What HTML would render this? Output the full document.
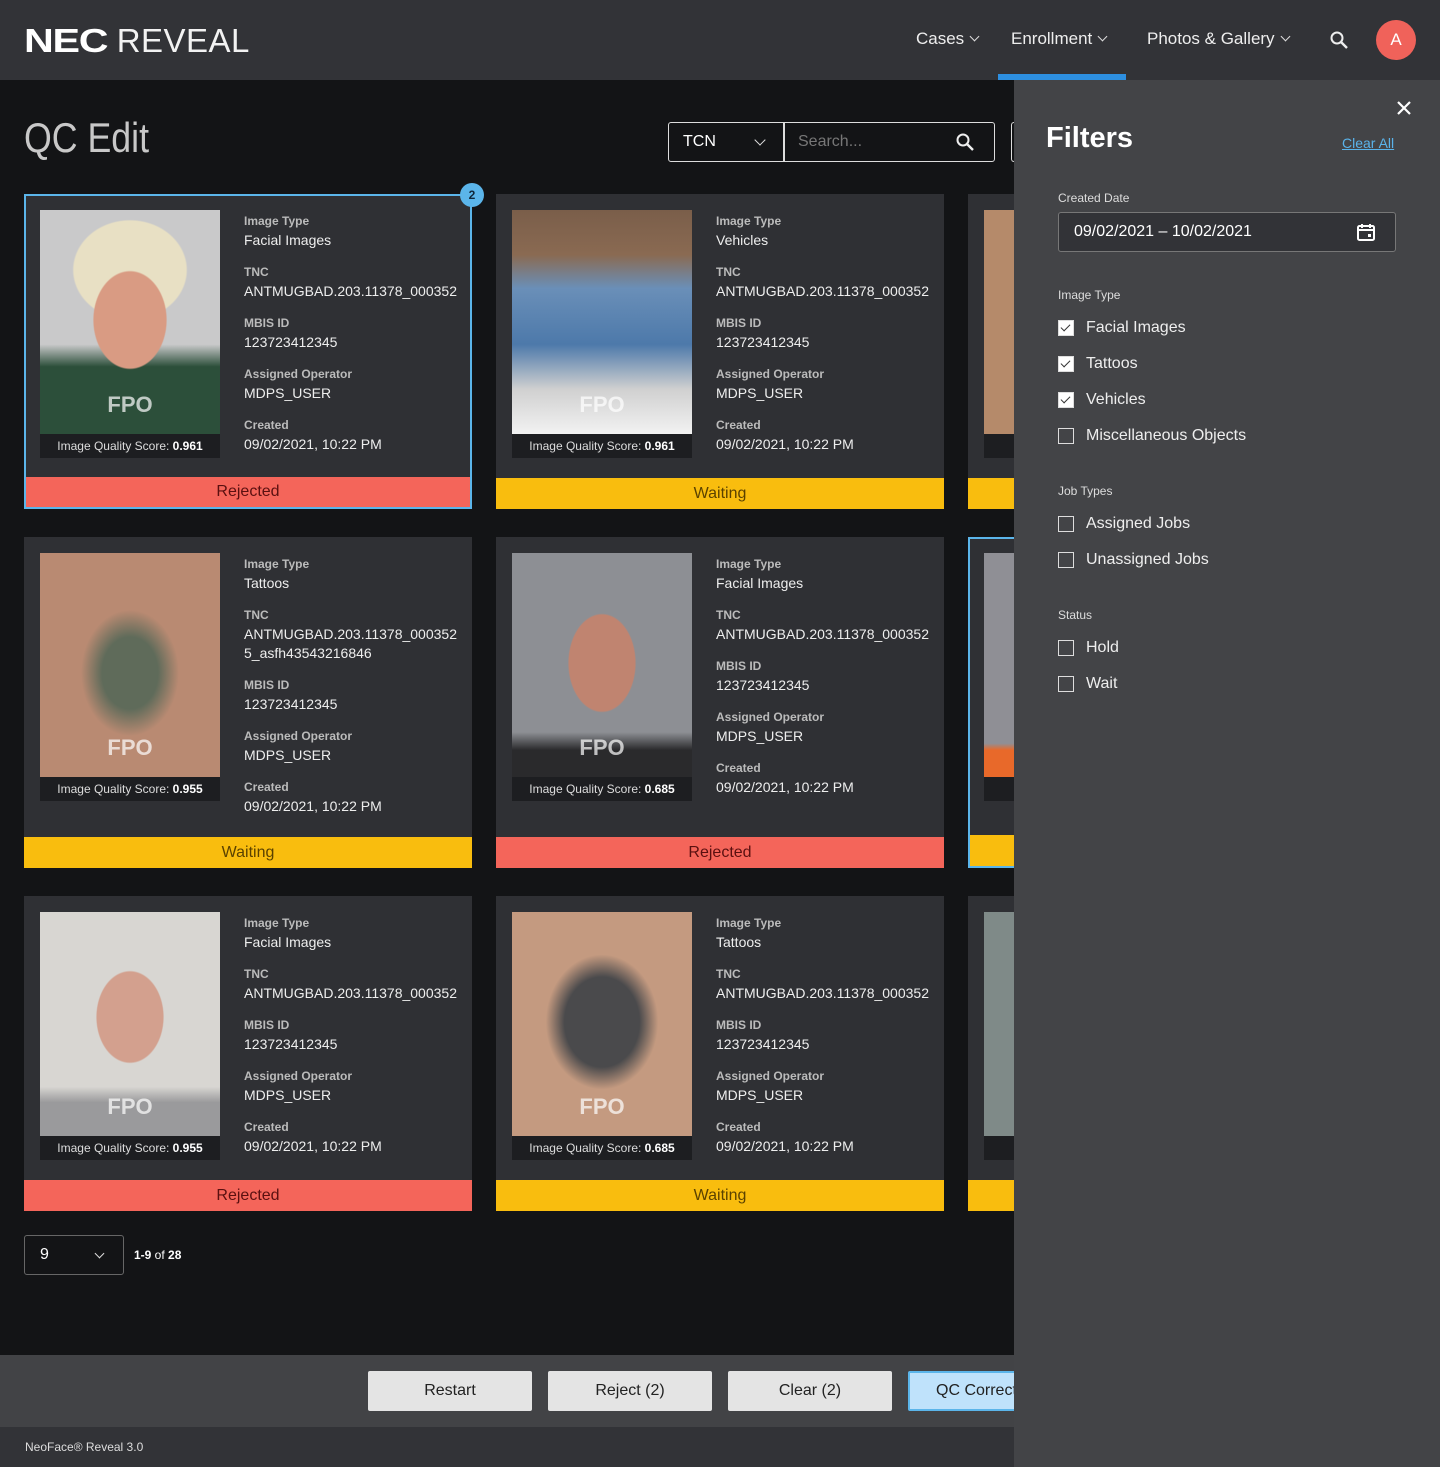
<!DOCTYPE html>
<html><head><meta charset="utf-8"><style>
*{box-sizing:border-box;margin:0;padding:0}
body{width:1440px;height:1467px;background:#131416;font-family:"Liberation Sans",sans-serif;color:#fff;position:relative;overflow:hidden}
.hdr{position:absolute;left:0;top:0;width:1440px;height:80px;background:#323337}
.logo{position:absolute;left:24px;top:22px;font-size:33px;white-space:nowrap}
.logo b{font-weight:900;display:inline-block;transform:scaleX(1.25);transform-origin:left;letter-spacing:-1px;margin-right:26px}
.logo span{font-weight:400;color:#f2f2f2;letter-spacing:0.5px}
.nav{position:absolute;top:29px;font-size:17px;color:#eee}
.chev{display:inline-block;width:7px;height:7px;border-right:1.6px solid #ddd;border-bottom:1.6px solid #ddd;transform:rotate(45deg);margin-left:7px;position:relative;top:-4px}
.ul{position:absolute;left:998px;top:74px;width:128px;height:6px;background:#2d8fe0}
.av{position:absolute;left:1376px;top:20px;width:40px;height:40px;border-radius:50%;background:#f0625a;text-align:center;line-height:40px;font-size:17px}
h1{position:absolute;left:24px;top:114px;font-size:42px;font-weight:400;color:#c8c8c8;transform:scaleX(0.85);transform-origin:left}
.sel{position:absolute;left:668px;top:122px;width:327px;height:40px;border:1.5px solid #ddd;border-radius:3px}
.card{position:absolute;width:448px;background:#2f3034}
.img{position:absolute;left:16px;top:16px;width:180px;height:224px;overflow:hidden}
.fpo{position:absolute;left:0;width:180px;text-align:center;top:182px;font-size:22px;font-weight:bold;color:rgba(255,255,255,.7)}
.score{position:absolute;left:16px;top:240px;width:180px;height:24px;background:#1d1e21;font-size:12px;text-align:center;line-height:24px;color:#ddd}
.info{position:absolute;left:220px;top:18px;font-size:14px;color:#eee;line-height:19px}
.info .l{font-size:12px;font-weight:bold;color:#bbb;margin-top:13px}
.info .l:first-child{margin-top:0}
.st{position:absolute;left:0;bottom:0;width:100%;height:31px;text-align:center;line-height:31px;font-size:16px}
.rej{background:#f4655a;color:#5a1010}.wai{background:#f9bd0e;color:#5b4200}
.panel{position:absolute;left:1014px;top:80px;width:426px;height:1387px;background:#434447}
.cb{position:absolute;left:44px;width:16px;height:16px;border:1.5px solid #ddd}
.cb.on{background:#fff}
.cb.on:after{content:"";position:absolute;left:4px;top:1px;width:4px;height:8px;border-right:1.6px solid #333;border-bottom:1.6px solid #333;transform:rotate(45deg)}
.cl{position:absolute;left:72px;font-size:16px;color:#eee}
.sh{position:absolute;left:44px;font-size:12px;color:#ddd}
.btn{position:absolute;top:1371px;width:164px;height:40px;background:#e4e4e4;border-radius:2px;color:#222;font-size:16px;text-align:center;line-height:40px}
</style></head><body>
<div class="hdr">
<div class="logo"><b>NEC</b><span>REVEAL</span></div>
<div class="nav" style="left:916px">Cases<i class="chev"></i></div>
<div class="nav" style="left:1011px">Enrollment<i class="chev"></i></div>
<div class="nav" style="left:1147px">Photos &amp; Gallery<i class="chev"></i></div>
<svg style="position:absolute;left:1329px;top:30px" width="20" height="20" viewBox="0 0 20 20"><circle cx="8" cy="8" r="5.5" fill="none" stroke="#eee" stroke-width="2"/><path d="M12 12l6 6" stroke="#eee" stroke-width="2.4"/></svg>
<div class="av">A</div>
</div>
<div class="ul"></div>
<h1>QC Edit</h1>
<div class="sel">
<div style="position:absolute;left:14px;top:10px;font-size:16px">TCN</div>
<i class="chev" style="position:absolute;left:80px;top:13px;width:8px;height:8px"></i>
<div style="position:absolute;left:114px;top:0;width:1.5px;height:38px;background:#ddd"></div>
<div style="position:absolute;left:129px;top:10px;font-size:16px;color:#777">Search...</div>
<svg style="position:absolute;left:286px;top:9px" width="20" height="20" viewBox="0 0 20 20"><circle cx="8" cy="8" r="5.5" fill="none" stroke="#eee" stroke-width="2"/><path d="M12 12l6 6" stroke="#eee" stroke-width="2.4"/></svg>
</div>
<div style="position:absolute;left:1011px;top:122px;width:6px;height:40px;border:1.5px solid #ddd;border-right:none;border-radius:3px 0 0 3px"></div>

<!-- Row 1 -->
<div class="card" style="left:24px;top:194px;height:315px;border:2px solid #5bb5ea">
<div class="img" style="left:14px;top:14px;background:radial-gradient(ellipse 60px 80px at 90px 110px,#d99b83 60%,transparent 62%),radial-gradient(ellipse 80px 70px at 90px 60px,#e8e0c4 70%,transparent 72%),linear-gradient(#c9c9ca 0,#c9c9ca 60%,#2c4f3a 70%)"><div class="fpo">FPO</div></div>
<div class="score" style="left:14px;top:238px">Image Quality Score: <b style="color:#fff">0.961</b></div>
<div class="info" style="left:218px;top:16px"><div class="l">Image Type</div>Facial Images<div class="l">TNC</div>ANTMUGBAD.203.11378_000352<div class="l">MBIS ID</div>123723412345<div class="l">Assigned Operator</div>MDPS_USER<div class="l">Created</div>09/02/2021, 10:22 PM</div>
<div class="st rej" style="height:30px;line-height:30px">Rejected</div>
<div style="position:absolute;left:434px;top:-13px;width:24px;height:24px;border-radius:50%;background:#5bb5ea;color:#10283a;font-size:12px;font-weight:bold;text-align:center;line-height:24px">2</div>
</div>
<div class="card" style="left:496px;top:194px;height:315px">
<div class="img" style="background:linear-gradient(#7a5e4a 0,#8a6a52 20%,#6a8fb8 35%,#4d79aa 60%,#d0d0d0 80%,#f2f2f2)"><div class="fpo">FPO</div></div>
<div class="score">Image Quality Score: <b style="color:#fff">0.961</b></div>
<div class="info"><div class="l">Image Type</div>Vehicles<div class="l">TNC</div>ANTMUGBAD.203.11378_000352<div class="l">MBIS ID</div>123723412345<div class="l">Assigned Operator</div>MDPS_USER<div class="l">Created</div>09/02/2021, 10:22 PM</div>
<div class="st wai">Waiting</div>
</div>
<div class="card" style="left:968px;top:194px;height:315px">
<div class="img" style="background:#b58a6a"></div><div class="score"></div><div class="st wai"></div>
</div>

<!-- Row 2 -->
<div class="card" style="left:24px;top:537px;height:331px">
<div class="img" style="background:radial-gradient(ellipse 70px 90px at 90px 120px,#5f6b5a 40%,transparent 70%),#b98a72"><div class="fpo">FPO</div></div>
<div class="score">Image Quality Score: <b style="color:#fff">0.955</b></div>
<div class="info"><div class="l">Image Type</div>Tattoos<div class="l">TNC</div>ANTMUGBAD.203.11378_000352<br>5_asfh43543216846<div class="l">MBIS ID</div>123723412345<div class="l">Assigned Operator</div>MDPS_USER<div class="l">Created</div>09/02/2021, 10:22 PM</div>
<div class="st wai">Waiting</div>
</div>
<div class="card" style="left:496px;top:537px;height:331px">
<div class="img" style="background:radial-gradient(ellipse 55px 80px at 90px 110px,#c08470 60%,transparent 62%),linear-gradient(#8d8f94 0,#8d8f94 80%,#2a2a2c 88%)"><div class="fpo">FPO</div></div>
<div class="score">Image Quality Score: <b style="color:#fff">0.685</b></div>
<div class="info"><div class="l">Image Type</div>Facial Images<div class="l">TNC</div>ANTMUGBAD.203.11378_000352<div class="l">MBIS ID</div>123723412345<div class="l">Assigned Operator</div>MDPS_USER<div class="l">Created</div>09/02/2021, 10:22 PM</div>
<div class="st rej">Rejected</div>
</div>
<div class="card" style="left:968px;top:537px;height:331px;border:2px solid #5bb5ea">
<div class="img" style="left:14px;top:14px;background:linear-gradient(#8f8f95 0,#8f8f95 85%,#e8692a 88%)"></div><div class="score" style="left:14px;top:238px"></div><div class="st wai"></div>
</div>

<!-- Row 3 -->
<div class="card" style="left:24px;top:896px;height:315px">
<div class="img" style="background:radial-gradient(ellipse 55px 75px at 90px 105px,#d3a08e 60%,transparent 62%),linear-gradient(#d8d6d2 0,#d8d6d2 78%,#9a9a9c 85%)"><div class="fpo">FPO</div></div>
<div class="score">Image Quality Score: <b style="color:#fff">0.955</b></div>
<div class="info"><div class="l">Image Type</div>Facial Images<div class="l">TNC</div>ANTMUGBAD.203.11378_000352<div class="l">MBIS ID</div>123723412345<div class="l">Assigned Operator</div>MDPS_USER<div class="l">Created</div>09/02/2021, 10:22 PM</div>
<div class="st rej">Rejected</div>
</div>
<div class="card" style="left:496px;top:896px;height:315px">
<div class="img" style="background:radial-gradient(ellipse 75px 90px at 90px 110px,#4a4a4c 50%,transparent 75%),#c49a80"><div class="fpo">FPO</div></div>
<div class="score">Image Quality Score: <b style="color:#fff">0.685</b></div>
<div class="info"><div class="l">Image Type</div>Tattoos<div class="l">TNC</div>ANTMUGBAD.203.11378_000352<div class="l">MBIS ID</div>123723412345<div class="l">Assigned Operator</div>MDPS_USER<div class="l">Created</div>09/02/2021, 10:22 PM</div>
<div class="st wai">Waiting</div>
</div>
<div class="card" style="left:968px;top:896px;height:315px">
<div class="img" style="background:#7f8a88"></div><div class="score"></div><div class="st wai"></div>
</div>

<div style="position:absolute;left:24px;top:1235px;width:100px;height:40px;border:1px solid #666;border-radius:3px">
<div style="position:absolute;left:15px;top:10px;font-size:16px">9</div><i class="chev" style="position:absolute;left:64px;top:14px"></i></div>
<div style="position:absolute;left:134px;top:1248px;font-size:12px"><b>1-9</b> of <b>28</b></div>

<div style="position:absolute;left:0;top:1355px;width:1440px;height:72px;background:#424346"></div>
<div style="position:absolute;left:0;top:1427px;width:1440px;height:40px;background:#323337"></div>
<div style="position:absolute;left:25px;top:1440px;font-size:12px;color:#ddd">NeoFace® Reveal 3.0</div>
<div class="btn" style="left:368px">Restart</div>
<div class="btn" style="left:548px">Reject (2)</div>
<div class="btn" style="left:728px">Clear (2)</div>
<div class="btn" style="left:908px;background:#bfe2fb;border:2px solid #5bb5ea;text-align:left;padding-left:26px;line-height:36px">QC Correct</div>

<div class="panel">
<svg style="position:absolute;left:382px;top:20px" width="16" height="16" viewBox="0 0 16 16"><path d="M2 2l12 12M14 2L2 14" stroke="#fff" stroke-width="2.2"/></svg>
<div style="position:absolute;left:32px;top:42px;font-size:29px;font-weight:bold">Filters</div>
<div style="position:absolute;left:328px;top:55px;font-size:14px;color:#5ab3ea;text-decoration:underline">Clear All</div>
<div class="sh" style="top:111px">Created Date</div>
<div style="position:absolute;left:44px;top:132px;width:338px;height:40px;background:#323337;border:1px solid #777;border-radius:3px">
<div style="position:absolute;left:15px;top:10px;font-size:16px">09/02/2021 – 10/02/2021</div>
<svg style="position:absolute;left:297px;top:9px" width="20" height="20" viewBox="0 0 20 20"><rect x="2" y="4" width="16" height="14" rx="1.5" fill="none" stroke="#fff" stroke-width="2"/><path d="M2 8h16M6 2v4M14 2v4" stroke="#fff" stroke-width="2"/><rect x="12" y="12" width="3" height="3" fill="#fff"/></svg>
</div>
<div class="sh" style="top:208px">Image Type</div>
<div class="cb on" style="top:240px"></div><div class="cl" style="top:239px">Facial Images</div>
<div class="cb on" style="top:276px"></div><div class="cl" style="top:275px">Tattoos</div>
<div class="cb on" style="top:312px"></div><div class="cl" style="top:311px">Vehicles</div>
<div class="cb" style="top:348px"></div><div class="cl" style="top:347px">Miscellaneous Objects</div>
<div class="sh" style="top:404px">Job Types</div>
<div class="cb" style="top:436px"></div><div class="cl" style="top:435px">Assigned Jobs</div>
<div class="cb" style="top:472px"></div><div class="cl" style="top:471px">Unassigned Jobs</div>
<div class="sh" style="top:528px">Status</div>
<div class="cb" style="top:560px"></div><div class="cl" style="top:559px">Hold</div>
<div class="cb" style="top:596px"></div><div class="cl" style="top:595px">Wait</div>
</div>
</body></html>
